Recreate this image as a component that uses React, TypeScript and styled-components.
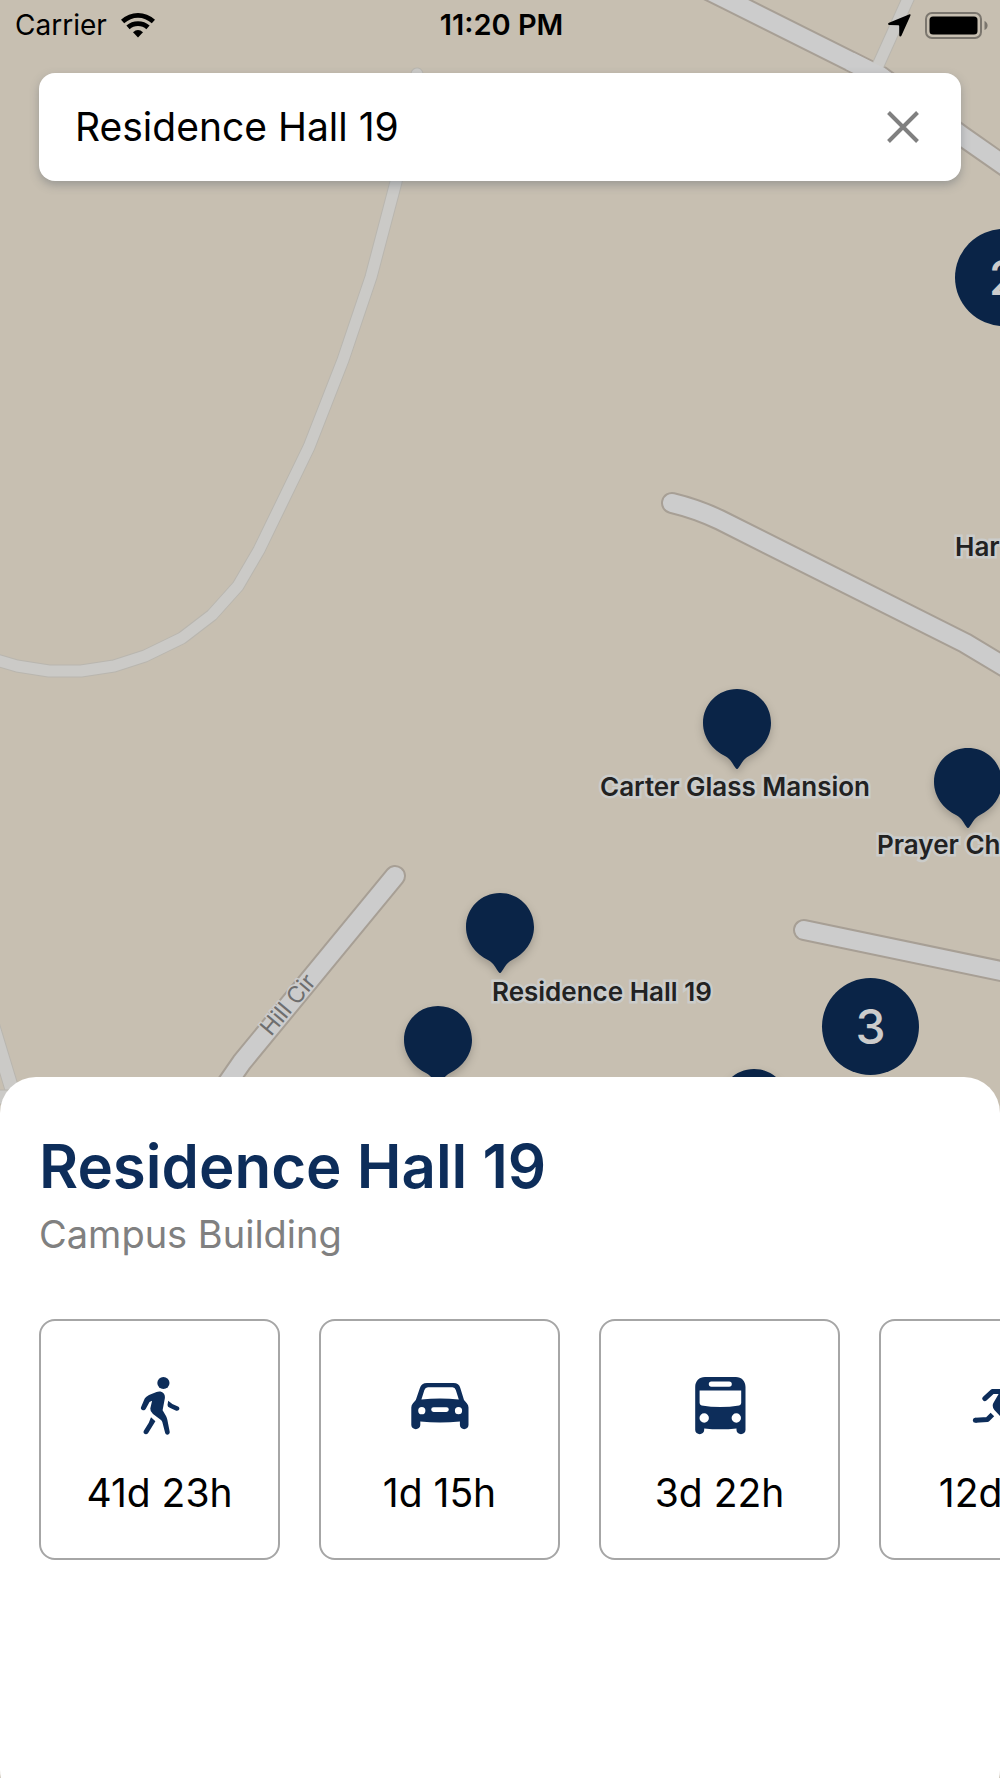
import React, { useState } from "react";
import styled, { createGlobalStyle } from "styled-components";

const GlobalStyle = createGlobalStyle`
  * { box-sizing: border-box; }
  html, body { margin: 0; padding: 0; }
  body, button, input { font-family: Inter, Roboto, sans-serif; }
`;

const color = {
  land: "#c7bfb1",
  road: "#cccccc",
  roadEdge: "#a79f95",
  path: "#cbcac7",
  pathEdge: "#b9b6af",
  pin: "#0a2447",
  navy: "#0d2d5a",
  grey: "#808080",
};

const Screen = styled.div`
  display: flex;
  flex-direction: column;
  height: 100vh;
  overflow: hidden;
  background: ${color.land};
`;

const MapArea = styled.main`
  position: relative;
  flex: 1;
  min-height: 0;
  overflow: hidden;
`;

const Roads = styled.svg`
  position: absolute;
  top: 0;
  left: 0;
`;

const StreetName = styled.text`
  font: 400 23px Inter, Roboto, sans-serif;
  fill: #6e6e6e;
  stroke: ${color.road};
  stroke-width: 3px;
  paint-order: stroke;
`;

const Pin = styled.button<{ $x: number; $y: number }>`
  position: absolute;
  left: ${(p) => p.$x}px;
  top: ${(p) => p.$y}px;
  width: 68px;
  height: 80px;
  padding: 0;
  border: 0;
  background: none;
  filter: drop-shadow(0 4px 4px rgba(0, 0, 0, 0.2));

  svg { display: block; }
`;

const PlaceName = styled.span<{ $x: number; $y: number }>`
  position: absolute;
  left: ${(p) => p.$x}px;
  top: ${(p) => p.$y}px;
  font-size: 26px;
  font-weight: 600;
  line-height: 32px;
  white-space: nowrap;
  color: #222222;
  -webkit-text-stroke: 5px #cbccca;
  paint-order: stroke fill;
`;

const Cluster = styled.button<{ $x: number; $y: number }>`
  position: absolute;
  left: ${(p) => p.$x}px;
  top: ${(p) => p.$y}px;
  width: 97px;
  height: 97px;
  padding: 0;
  border: 0;
  border-radius: 50%;
  background: ${color.pin};
  color: ${color.road};
  font-size: 48px;
  font-weight: 500;
  line-height: 97px;
`;

const Overlay = styled.header`
  position: relative;
  display: flex;
  flex-direction: column;
  gap: 23px;
`;

const StatusBar = styled.div`
  display: grid;
  grid-template-columns: 1fr auto 1fr;
  align-items: center;
  height: 50px;
  padding: 0 12px 0 15px;
  font-size: 28px;
  line-height: 34px;
  color: #000;
`;

const StatusGroup = styled.div<{ $end?: boolean }>`
  display: flex;
  align-items: center;
  justify-content: ${(p) => (p.$end ? "flex-end" : "flex-start")};
  gap: 14px;
`;

const Clock = styled.time`
  font-size: 29px;
  font-weight: 600;
`;

const SearchBar = styled.form`
  display: flex;
  align-items: center;
  height: 108px;
  margin: 0 39px;
  padding: 0 36px;
  border-radius: 16px;
  background: #fff;
  box-shadow: 0 4px 10px rgba(80, 90, 100, 0.38);
`;

const SearchInput = styled.input`
  flex: 1;
  min-width: 0;
  padding: 0;
  border: 0;
  outline: 0;
  background: transparent;
  font-size: 39px;
  line-height: 48px;
  color: #000;
`;

const ClearButton = styled.button`
  display: flex;
  padding: 0;
  border: 0;
  background: none;
`;

const Sheet = styled.section`
  position: relative;
  flex: none;
  margin: -36px 0 -28px;
  padding: 53px 0 246px;
  border-radius: 36px;
  background: #fff;
`;

const Heading = styled.div`
  display: flex;
  flex-direction: column;
  gap: 8px;
  padding: 0 39px;
`;

const Title = styled.h1`
  margin: 0;
  font-size: 60px;
  font-weight: 600;
  line-height: 72px;
  color: ${color.navy};
`;

const Subtitle = styled.p`
  margin: 0;
  font-size: 38px;
  line-height: 48px;
  color: ${color.grey};
`;

const Modes = styled.div`
  display: flex;
  gap: 39px;
  margin-top: 61px;
  padding: 0 39px;
  overflow-x: auto;
  scrollbar-width: none;
`;

const ModeCard = styled.button`
  display: flex;
  flex: none;
  flex-direction: column;
  align-items: center;
  gap: 33px;
  width: 241px;
  height: 241px;
  padding: 55px 0 0;
  border: 2px solid #a6a6a6;
  border-radius: 16px;
  background: #fff;
  color: #000;
  font-size: 39px;
  line-height: 48px;
`;

const Road = ({ d }: { d: string }) => (
  <g fill="none" strokeLinecap="round" strokeLinejoin="round">
    <path d={d} stroke={color.roadEdge} strokeWidth="22" />
    <path d={d} stroke={color.road} strokeWidth="18" />
  </g>
);

const FootPath = ({ d, width = 13 }: { d: string; width?: number }) => (
  <g fill="none" strokeLinecap="round" strokeLinejoin="round">
    <path d={d} stroke={color.pathEdge} strokeWidth={width} />
    <path d={d} stroke={color.path} strokeWidth={width - 2} />
  </g>
);

const WalkIcon = () => (
  <svg width="60" height="60" viewBox="0 0 60 60" fill={color.navy} aria-hidden="true">
    <circle cx="33.4" cy="7" r="6.1" />
    <path d="M19 19L26.5 16C31 14.2 35.5 17 34.9 22L32.6 34.2L36 40Q37 42 37.4 44L39.7 55.8C40.2 59 35.8 59.8 35.1 56.8L32.3 46Q32 44.8 31 44L23 38Q20 35.6 20.3 32.5L22.1 24.8L19.5 26L15.7 33C14.2 35.8 9.8 33.8 11.1 31L14.6 22.8Q15.3 21 19 19Z" />
    <path d="M21 41.3L25.4 45.2L18 57.2C16.3 59.7 12.5 57.6 13.7 55L18.8 46.8Z" />
    <path d="M38.2 24.8L42.3 28L48 30.6C50.8 32 49 35.6 46.2 34.7L40.3 32Q37.2 30.8 37.5 29Z" />
  </svg>
);

const CarIcon = () => (
  <svg width="60" height="60" viewBox="0 0 60 60" fill={color.navy} aria-hidden="true">
    <path
      fillRule="evenodd"
      d="M1.3 31.5Q1.3 29 3 27.2L5.8 24L9.9 12Q11.5 7 17 7H43.5Q49 7 50.3 12L54 24L56.8 27.2Q58.5 29 58.5 31.5V49C58.5 54.5 49.9 54.5 49.9 49V45.6Q30 47.6 10.3 45.6V49C10.3 54.5 1.3 54.5 1.3 49ZM11.4 23.6Q30 21.2 48.8 23.6L45.8 14Q45 11.3 42.5 11.3H18Q15.3 11.3 14.4 14ZM8.2 34.7a3.6 3.6 0 1 0 7.2 0a3.6 3.6 0 1 0 -7.2 0ZM44.9 34.7a3.6 3.6 0 1 0 7.2 0a3.6 3.6 0 1 0 -7.2 0ZM23.6 31.2a2.4 2.4 0 0 0 0 4.8H36.4a2.4 2.4 0 0 0 0 -4.8Z"
    />
  </svg>
);

const BusIcon = () => (
  <svg width="60" height="60" viewBox="0 0 60 60" fill={color.navy} aria-hidden="true">
    <path
      fillRule="evenodd"
      d="M5.2 11C5.2 5 9.2 1 15 1H45.8C51.5 1 55.5 5 55.5 11V54C55.5 59.5 46.5 59.5 46.5 54V52.5Q30.4 54.2 14.2 52.5V54C14.2 59.5 5.2 59.5 5.2 54ZM21.4 5.5a2.6 2.6 0 0 0 0 5.2H39.2a2.6 2.6 0 0 0 0 -5.2ZM9.6 14.6V27Q9.6 29 11.6 29.4Q30.4 32.4 49.2 29.4Q51.2 29 51.2 27V14.6ZM9.5 42a4.7 4.7 0 1 0 9.4 0a4.7 4.7 0 1 0 -9.4 0ZM41.6 42a4.7 4.7 0 1 0 9.4 0a4.7 4.7 0 1 0 -9.4 0Z"
    />
  </svg>
);

const RunIcon = () => (
  <svg width="60" height="60" viewBox="0 0 60 60" fill={color.navy} aria-hidden="true">
    <g fill="none" stroke={color.navy} strokeWidth="5" strokeLinejoin="round">
      <path d="M14.8 22.6L22.4 15.6H36L42 25L50 27" strokeLinecap="round" />
      <path d="M5.4 44.2L17.4 43.6L22.4 38.6" />
    </g>
    <circle cx="5.4" cy="44.2" r="2.5" />
    <path d="M28.6 18L38 18L33 32L38 42L32 48L30 40L24.4 34Q21.6 30.5 23.4 27Z" />
    <circle cx="46" cy="11" r="5.5" />
  </svg>
);

const MapPin = ({ x, y, label }: { x: number; y: number; label: string }) => (
  <Pin type="button" $x={x} $y={y} aria-label={label}>
    <svg width="68" height="80" viewBox="0 0 68 80" fill={color.pin} aria-hidden="true">
      <path d="M34 0C53 0 68 15 68 34C68 49 58 61 46 67C40 70 38 76 35 79.5Q34 80.6 33 79.5C30 76 28 70 22 67C10 61 0 49 0 34C0 15 15 0 34 0Z" />
    </svg>
  </Pin>
);

const modes = [
  { name: "Walk", time: "41d 23h", Icon: WalkIcon },
  { name: "Drive", time: "1d 15h", Icon: CarIcon },
  { name: "Bus", time: "3d 22h", Icon: BusIcon },
  { name: "Run", time: "12d 2h", Icon: RunIcon },
];

export default function App() {
  const [query, setQuery] = useState("Residence Hall 19");

  return (
    <Screen>
      <GlobalStyle />
      <MapArea>
        <Roads width="1000" height="1120" viewBox="0 0 1000 1120" aria-hidden="true">
          <FootPath d="M417 74L396 182L371 277L343 360L309 447L259 550L238 586L212 615L182 638L145 656L114 666L81 671H49L17 666L0 661L-20 655" />
          <FootPath width={15} d="M-12 1010L14 1096" />
          <FootPath width={15} d="M-12 1097H40" />
          <Road d="M700 -14L728 0L880 76L962 136L1012 171" />
          <FootPath d="M912 -10L876 70" />
          <path d="M850 61L880 76L900 91" stroke={color.road} strokeWidth="18" fill="none" />
          <Road d="M672 503Q697 509 720 520L965 643L1020 676" />
          <Road d="M395 876L242 1062L215 1101" />
          <Road d="M804 930L1020 975" />
          <StreetName transform="translate(271 1037) rotate(-50)">Hill Cir</StreetName>
        </Roads>

        <MapPin x={703} y={689} label="Carter Glass Mansion" />
        <MapPin x={934} y={748} label="Prayer Chapel" />
        <MapPin x={466} y={893} label="Residence Hall 19" />
        <MapPin x={404} y={1006} label="Campus building" />
        <MapPin x={720} y={1069} label="Campus building" />
        <PlaceName $x={955} $y={531}>Har</PlaceName>
        <PlaceName $x={600} $y={771}>Carter Glass Mansion</PlaceName>
        <PlaceName $x={877} $y={829}>Prayer Ch</PlaceName>
        <PlaceName $x={492} $y={976}>Residence Hall 19</PlaceName>
        <Cluster type="button" $x={955} $y={229}>2</Cluster>
        <Cluster type="button" $x={822} $y={978}>3</Cluster>

        <Overlay>
          <StatusBar>
            <StatusGroup>
              <span>Carrier</span>
              <svg width="34" height="25" viewBox="0 0 34 25" aria-hidden="true">
                <g fill="none" stroke="#000" strokeWidth="4.8">
                  <path d="M1.6 8.6Q8.4 2.4 17 2.4T32.4 8.6" />
                  <path d="M7 14.4Q11.2 10.6 17 10.6T27 14.4" />
                </g>
                <path d="M17 24.6L12 19.2Q17 14.8 22 19.2Z" />
              </svg>
            </StatusGroup>
            <Clock>11:20 PM</Clock>
            <StatusGroup $end>
              <svg width="23" height="23" viewBox="0 0 23 23" aria-hidden="true">
                <path d="M21.6 .2Q22.9 0 22.5 1.4L13.4 21.8Q12.9 22.6 12 22.4Q11.2 22.2 11.2 21.2V12Q11.2 11.2 10.4 11.2L1.2 11.1Q.2 11 .1 10.1Q0 9.2 1 8.8Z" />
              </svg>
              <svg width="63" height="27" viewBox="0 0 63 27" aria-hidden="true">
                <rect x="1" y="1" width="55" height="25" rx="6" fill="none" stroke="#7b766e" strokeWidth="2" />
                <rect x="4.5" y="4.5" width="48" height="18" rx="3.5" />
                <path d="M59.5 9Q62.6 10.5 62.6 13.5T59.5 18Z" fill="#7b766e" />
              </svg>
            </StatusGroup>
          </StatusBar>

          <SearchBar role="search" onSubmit={(e) => e.preventDefault()}>
            <SearchInput
              type="text"
              aria-label="Search campus"
              value={query}
              onChange={(e) => setQuery(e.target.value)}
            />
            <ClearButton type="button" aria-label="Clear search" onClick={() => setQuery("")}>
              <svg width="44" height="44" viewBox="0 0 44 44" stroke={color.grey} strokeWidth="4" aria-hidden="true">
                <path d="M7.5 7.5L36.5 36.5M36.5 7.5L7.5 36.5" />
              </svg>
            </ClearButton>
          </SearchBar>
        </Overlay>
      </MapArea>

      <Sheet>
        <Heading>
          <Title>Residence Hall 19</Title>
          <Subtitle>Campus Building</Subtitle>
        </Heading>
        <Modes>
          {modes.map(({ name, time, Icon }) => (
            <ModeCard key={name} type="button" title={name}>
              <Icon />
              <span>{time}</span>
            </ModeCard>
          ))}
        </Modes>
      </Sheet>
    </Screen>
  );
}
